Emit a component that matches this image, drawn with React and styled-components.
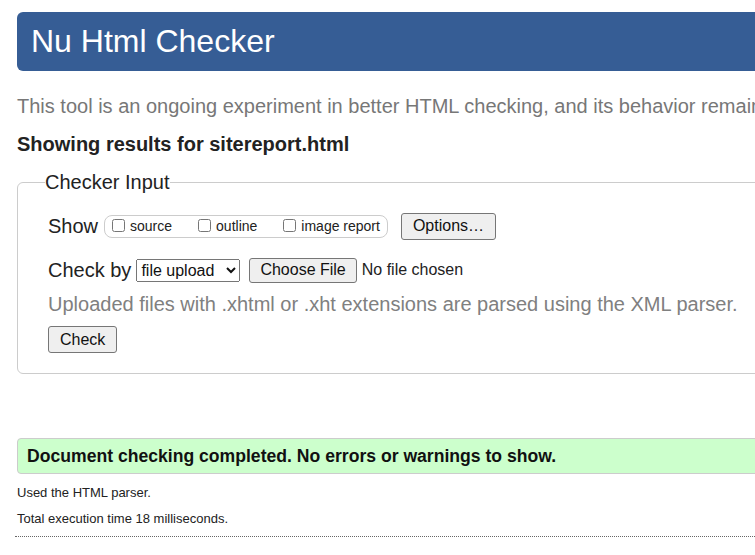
import React from 'react';
import styled, {createGlobalStyle} from 'styled-components';

const GlobalStyle = createGlobalStyle`
  html, body {
    margin: 0;
    padding: 0;
    background: #fff;
    overflow: hidden;
  }
  body {
    font-family: "Liberation Sans", Arial, sans-serif;
    color: #222;
  }
`;

const Page = styled.div`
  width: 1000px;
  padding: 12px 17px 0;
`;

const Header = styled.h1`
  margin: 0;
  height: 59px;
  display: flex;
  align-items: center;
  padding: 0 14px;
  background: #365d95;
  border-radius: 6px;
  color: #fff;
  font-size: 32px;
  font-weight: normal;
`;

const Intro = styled.p`
  margin: 24px 0 0;
  font-size: 20px;
  line-height: 23px;
  color: #777;
  white-space: nowrap;
`;

const Heading = styled.h2`
  margin: 15px 0 0;
  font-size: 20px;
  line-height: 23px;
  font-weight: bold;
  color: #222;
`;

const Fieldset = styled.fieldset`
  margin: 15px 0 0;
  padding: 17px 30px 20px;
  border: 1px solid #ccc;
  border-radius: 6px;
  min-width: 0;
`;

const Legend = styled.legend`
  margin-left: -3px;
  padding: 0;
  font-size: 20px;
  line-height: 23px;
  color: #222;
`;

const Row = styled.div`
  display: flex;
  align-items: center;
  height: 30px;
  margin-top: ${p => p.$top || 0}px;
  font-size: 20px;
`;

const Label = styled.span`
  margin-right: ${p => p.$gap || 5}px;
`;

const ShowGroup = styled.div`
  display: flex;
  align-items: center;
  height: 21px;
  padding: 0 7px 0 3px;
  border: 1px solid #ccc;
  border-radius: 8px;
  font-size: 14px;
  margin-right: 13px;
`;

const Option = styled.label`
  display: flex;
  align-items: center;
  margin-right: ${p => p.$last ? 0 : 22}px;
  color: #222;

  input {
    width: 13px;
    height: 13px;
    margin: 0 5px 2px 4px;
  }
`;

const Button = styled.button`
  font-family: "Liberation Sans", Arial, sans-serif;
  font-size: 16px;
  height: ${p => p.$h || 27}px;
  padding: 0 ${p => p.$pad || 11}px;
  background: #efefef;
  border: 1px solid #767676;
  border-radius: 3px;
  color: #111;
`;

const Select = styled.select`
  font-family: "Liberation Sans", Arial, sans-serif;
  font-size: 16px;
  height: 23px;
  width: 104px;
  margin-right: 9px;
  color: #111;
`;

const NoFile = styled.span`
  margin-left: 5px;
  font-size: 16px;
  color: #222;
`;

const Hint = styled.p`
  margin: 8px 0 0;
  font-size: 20px;
  line-height: 23px;
  color: #808080;
`;

const CheckRow = styled.div`
  margin-top: 10px;
`;

const Success = styled.div`
  margin-top: 64px;
  height: 34px;
  display: flex;
  align-items: center;
  padding: 0 9px;
  background: #ccffcc;
  border: 1px solid #ccc;
  border-radius: 4px;
  font-size: 17.6px;
  font-weight: bold;
  color: #111;
`;

const Note = styled.p`
  margin: ${p => p.$top}px 0 0;
  font-size: 13px;
  line-height: 16px;
  color: #222;
`;

const Rule = styled.hr`
  margin: 9px 0 0 -2px;
  border: 0;
  border-top: 1px dotted #666;
`;

export default function App() {
    return (
        <>
            <GlobalStyle/>
            <Page>
                <Header>Nu Html Checker</Header>
                <Intro>
                    This tool is an ongoing experiment in better HTML checking, and its behavior remains subject to change
                </Intro>
                <Heading>Showing results for sitereport.html</Heading>
                <Fieldset>
                    <Legend>Checker Input</Legend>
                    <Row>
                        <Label $gap={6}>Show</Label>
                        <ShowGroup>
                            <Option><input type="checkbox"/>source</Option>
                            <Option><input type="checkbox"/>outline</Option>
                            <Option $last><input type="checkbox"/>image report</Option>
                        </ShowGroup>
                        <Button>Options…</Button>
                    </Row>
                    <Row $top={14}>
                        <Label $gap={5}>Check by</Label>
                        <Select defaultValue="file">
                            <option value="file">file upload</option>
                            <option value="address">address</option>
                            <option value="text">text input</option>
                        </Select>
                        <Button $h={25} $pad={10}>Choose File</Button>
                        <NoFile>No file chosen</NoFile>
                    </Row>
                    <Hint>Uploaded files with .xhtml or .xht extensions are parsed using the XML parser.</Hint>
                    <CheckRow>
                        <Button>Check</Button>
                    </CheckRow>
                </Fieldset>
                <Success>Document checking completed. No errors or warnings to show.</Success>
                <Note $top={11}>Used the HTML parser.</Note>
                <Note $top={10}>Total execution time 18 milliseconds.</Note>
                <Rule/>
            </Page>
        </>
    );
}
